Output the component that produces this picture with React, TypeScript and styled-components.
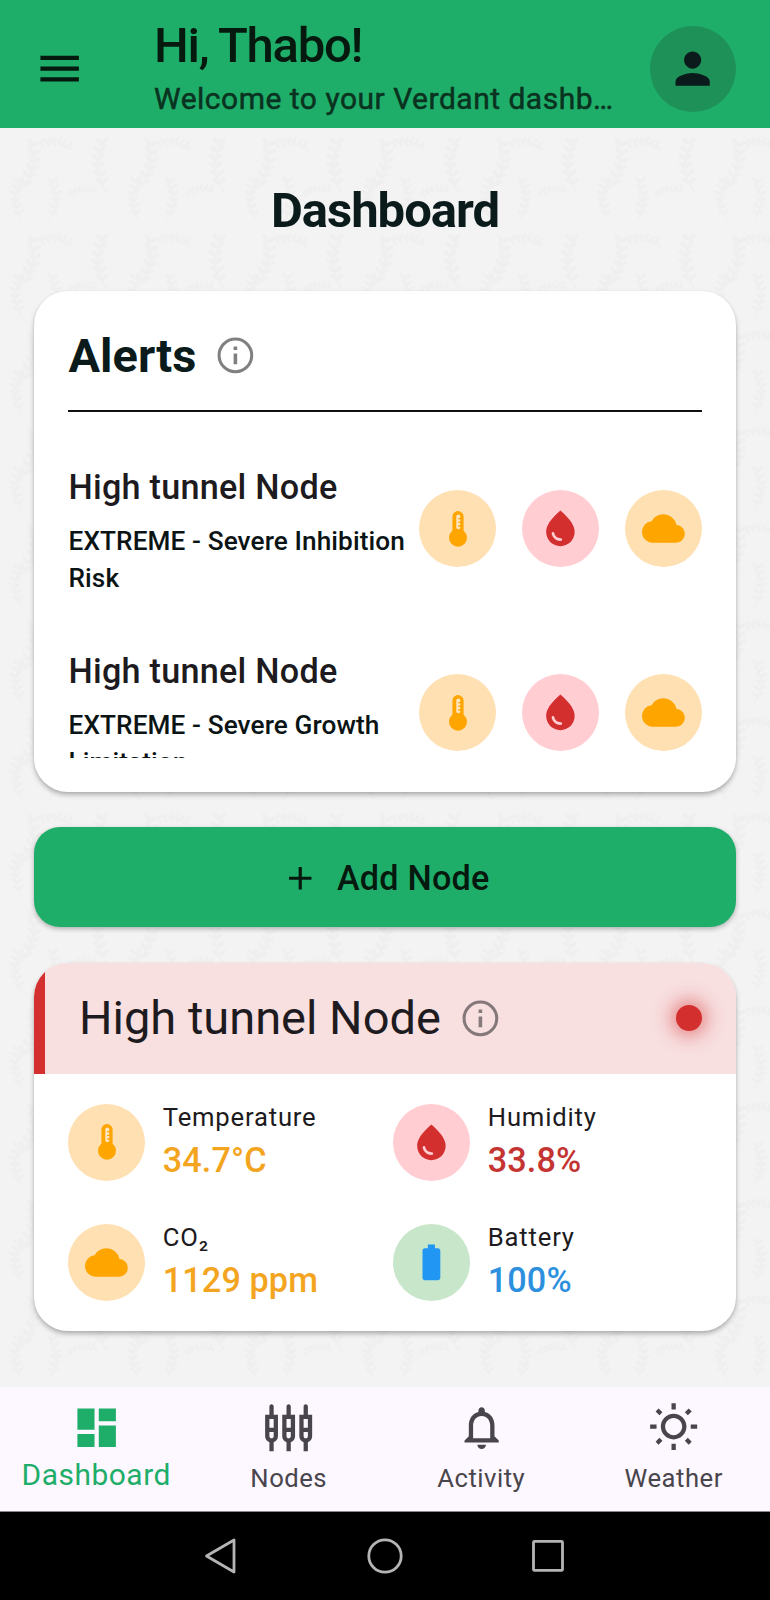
import React from "react";
import styled, { createGlobalStyle } from "styled-components";
import {
  MdAdd,
  MdBatteryFull,
  MdCloud,
  MdDashboard,
  MdMenu,
  MdOutlineNotifications,
  MdOutlineSettingsInputComponent,
  MdOutlineWbSunny,
  MdPerson,
  MdWaterDrop,
} from "react-icons/md";

const GlobalStyle = createGlobalStyle`
  * { box-sizing: border-box; }
  html, body { margin: 0; padding: 0; }
  body { font-family: Roboto, "Liberation Sans", sans-serif; color: #1d1b20; background: #f3f3f3; }
  svg { display: block; flex: none; overflow: visible; }
`;

const Screen = styled.div`
  width: 770px;
  height: 1600px;
  display: flex;
  flex-direction: column;
  overflow: hidden;
`;

const AppBar = styled.header`
  height: 128px;
  flex: none;
  display: flex;
  align-items: center;
  padding: 9px 34px 0 34px;
  background: #1fae69;
  color: #05190f;
`;

const MenuButton = styled.div`
  width: 120px;
  display: flex;
`;

const Greeting = styled.div`
  width: 465px;
  white-space: nowrap;
  height: 119px;
  padding-top: 8px;
`;

const GreetingTitle = styled.div`
  font-size: 49px;
  line-height: 58px;
  font-weight: 500;
  letter-spacing: -1.3px;
`;

const GreetingText = styled.div`
  margin-top: 5px;
  font-size: 30px;
  line-height: 38px;
  letter-spacing: 0.5px;
  overflow: hidden;
  text-overflow: ellipsis;
  color: #0a3220;
  -webkit-text-stroke: 0.5px #0a3220;
`;

const Avatar = styled.div`
  width: 86px;
  height: 86px;
  margin-left: auto;
  border-radius: 50%;
  background: #1e9158;
  color: #0b1a1a;
  display: flex;
  align-items: center;
  justify-content: center;
`;

const Main = styled.main`
  position: relative;
  height: 1259px;
  flex: none;
  padding: 0 34px;
  display: flex;
  flex-direction: column;
`;

const Backdrop = styled.svg`
  position: absolute;
  inset: 0;
  z-index: -1;
`;

const PageTitle = styled.h1`
  margin: 54px 0 50.7px;
  font-size: 49px;
  line-height: 58px;
  font-weight: 700;
  letter-spacing: -1px;
  text-align: center;
  color: #0b1a1a;
`;

const Card = styled.section`
  background: #fff;
  border-radius: 34px;
  box-shadow: 0 3px 5px rgba(0, 0, 0, 0.26), 0 1px 3px rgba(0, 0, 0, 0.06);
`;

const AlertsCard = styled(Card)`
  height: 501px;
  padding: 34px 34px;
`;

const AlertsHeading = styled.div`
  display: flex;
  align-items: center;
  gap: 18px;
  height: 62px;
  padding-left: 0.5px;
  color: #808080;
`;

const AlertsTitle = styled.h2`
  margin: 0;
  font-size: 47px;
  line-height: 56px;
  font-weight: 700;
  color: #0b1a1a;
`;

const Divider = styled.div`
  height: 2px;
  margin-top: 23px;
  background: #111;
`;

const AlertList = styled.div`
  height: 346px;
  overflow: hidden;
  padding-top: 25px;
`;

const AlertRow = styled.div`
  height: 184px;
  display: flex;
  align-items: center;
  justify-content: space-between;
`;

const AlertBody = styled.div`
  width: 350px;
  padding: 2px 0 0 0.5px;
  white-space: nowrap;
`;

const AlertName = styled.div`
  font-size: 34.2px;
  line-height: 51px;
  letter-spacing: 0.25px;
  font-weight: 500;
`;

const AlertText = styled.div`
  margin-top: 10px;
  font-size: 26.2px;
  line-height: 36.7px;
  letter-spacing: 0.1px;
  font-weight: 500;
  color: #0b1414;
`;

const BadgeGroup = styled.div`
  display: flex;
  gap: 25.8px;
`;

const tones = {
  amber: { bg: "#ffe0b2", fg: "#ffa500", text: "#f3a51f" },
  red: { bg: "#ffcdd2", fg: "#d32f2f", text: "#c43432" },
  green: { bg: "#c8e6c9", fg: "#2196f3", text: "#2c90de" },
};
type Tone = keyof typeof tones;

const Badge = styled.div<{ $tone: Tone }>`
  width: 77px;
  height: 77px;
  flex: none;
  border-radius: 50%;
  display: flex;
  align-items: center;
  justify-content: center;
  background: ${(p) => tones[p.$tone].bg};
  color: ${(p) => tones[p.$tone].fg};
`;

const AddButton = styled.button`
  height: 100.5px;
  margin: 35px 0 35.4px;
  flex: none;
  border: 0;
  border-radius: 26px;
  background: #1fae69;
  color: #05190f;
  box-shadow: 0 2px 5px rgba(0, 0, 0, 0.28);
  display: flex;
  align-items: center;
  justify-content: center;
  gap: 17px;
  padding: 2px 0 0 1px;
  font: 500 34.2px/50px Roboto, sans-serif;
  letter-spacing: 0.2px;
`;

const NodeCard = styled(Card)`
  height: 368px;
  overflow: hidden;
`;

const NodeHeader = styled.div`
  height: 111px;
  border-left: 11px solid #d32f2f;
  background: #f8dfe0;
  display: flex;
  align-items: center;
  gap: 18px;
  padding: 0 34px;
  color: #85787a;
`;

const NodeTitle = styled.div`
  font-size: 47px;
  line-height: 58px;
  color: #1d1b20;
`;

const StatusDot = styled.div`
  width: 26px;
  height: 26px;
  margin-left: auto;
  border-radius: 50%;
  background: #d32f2f;
  box-shadow: 0 0 17px 5px rgba(211, 47, 47, 0.5);
`;

const Metrics = styled.div`
  padding: 30.2px 34.3px 0;
  display: grid;
  grid-template-columns: 325px 1fr;
  row-gap: 43px;
`;

const Metric = styled.div`
  display: flex;
  gap: 17.5px;
  height: 77px;
`;

const MetricLabel = styled.div`
  margin-top: -4px;
  font-size: 25.67px;
  line-height: 34px;
  letter-spacing: 0.8px;
`;

const MetricValue = styled.div<{ $tone: Tone }>`
  font-size: 34.2px;
  line-height: 52px;
  letter-spacing: 0.1px;
  font-weight: 500;
  color: ${(p) => tones[p.$tone].text};
`;

const TabBar = styled.nav`
  height: 124px;
  flex: none;
  display: grid;
  grid-template-columns: repeat(4, 1fr);
  background: #fdf7ff;
`;

const Tab = styled.div<{ $active?: boolean }>`
  display: flex;
  flex-direction: column;
  align-items: center;
  padding-top: 15px;
  color: ${(p) => (p.$active ? "#1fae69" : "#49454c")};
  font-size: ${(p) => (p.$active ? "29.95px" : "25.67px")};
  letter-spacing: ${(p) => (p.$active ? "0.5px" : "0.5px")};
`;

const TabLabel = styled.span<{ $active?: boolean }>`
  line-height: 44px;
  margin-top: ${(p) => (p.$active ? "0" : "3px")};
`;

const SystemBar = styled.div`
  height: 89px;
  border-top: 1px solid #8a888b;
  background: #000;
  display: flex;
  justify-content: center;
  align-items: center;
`;

function InfoIcon() {
  return (
    <svg width="42.8" height="42.8" viewBox="0 0 24 24" fill="none" stroke="currentColor">
      <circle cx="12" cy="12" r="9.15" strokeWidth="1.7" />
      <path d="M12 11v6M12 7v2" strokeWidth="2" />
    </svg>
  );
}

function ThermometerIcon() {
  return (
    <svg width="18" height="36" viewBox="0 0 18 36">
      <path d="M3.4 5.6a5.6 5.6 0 0 1 11.2 0v14.1a9 9 0 1 1-11.2 0z" fill="currentColor" />
      <path d="M9.3 5.6v10.6" stroke="#ffe6c2" strokeWidth="4" strokeLinecap="round" />
      <path d="M9.3 7.6h3M9.3 11.3h3M9.3 15h3" stroke="currentColor" strokeWidth="1.3" />
    </svg>
  );
}

const leaflets = [0, 1, 2, 3, 4, 5];

function Sprig({ place }: { place: string }) {
  return (
    <g transform={place}>
      <path d="M8 26C-4 12-4-8 6-22" fill="none" stroke="#eeeeee" strokeWidth="1.5" />
      {leaflets.map((i) => (
        <g key={i} transform={`translate(${Math.abs(i - 2.5) * 2 - 2} ${20 - i * 8})`}>
          <ellipse cx="-5" cy="-2" rx="5.5" ry="2.2" transform="rotate(38)" />
          <ellipse cx="5" cy="-2" rx="5.5" ry="2.2" transform="rotate(-42)" />
        </g>
      ))}
    </g>
  );
}

function LeafBackdrop() {
  return (
    <Backdrop width="770" height="1259">
      <defs>
        <pattern id="leaves" x="-5" width="117.5" height="96.5" patternUnits="userSpaceOnUse">
          <g fill="#efefef">
            <Sprig place="translate(36 40) scale(-1 1) rotate(-12)" />
            <Sprig place="translate(104 38)" />
            <Sprig place="translate(21 72) scale(.8)" />
            <Sprig place="translate(60 72) scale(-.8 .8)" />
            <Sprig place="translate(84 62) rotate(80) scale(.6)" />
            <Sprig place="translate(58 14) rotate(95) scale(.7)" />
          </g>
        </pattern>
      </defs>
      <rect width="770" height="1259" fill="#f3f3f3" />
      <rect width="770" height="1259" fill="url(#leaves)" />
    </Backdrop>
  );
}

function AlertItem({ name, lines }: { name: string; lines: string[] }) {
  return (
    <AlertRow>
      <AlertBody>
        <AlertName>{name}</AlertName>
        <AlertText>
          {lines[0]}
          <br />
          {lines[1]}
        </AlertText>
      </AlertBody>
      <BadgeGroup>
        <Badge $tone="amber"><ThermometerIcon /></Badge>
        <Badge $tone="red"><MdWaterDrop size={42.8} /></Badge>
        <Badge $tone="amber"><MdCloud size={42.8} /></Badge>
      </BadgeGroup>
    </AlertRow>
  );
}

function MetricItem(props: { tone: Tone; icon: React.ReactNode; label: string; value: string }) {
  return (
    <Metric>
      <Badge $tone={props.tone}>{props.icon}</Badge>
      <div>
        <MetricLabel>{props.label}</MetricLabel>
        <MetricValue $tone={props.tone}>{props.value}</MetricValue>
      </div>
    </Metric>
  );
}

export default function App() {
  return (
    <Screen>
      <GlobalStyle />
      <AppBar>
        <MenuButton><MdMenu size={51.3} /></MenuButton>
        <Greeting>
          <GreetingTitle>Hi, Thabo!</GreetingTitle>
          <GreetingText>Welcome to your Verdant dashb…</GreetingText>
        </Greeting>
        <Avatar><MdPerson size={51.3} /></Avatar>
      </AppBar>
      <Main>
        <LeafBackdrop />
        <PageTitle>Dashboard</PageTitle>
        <AlertsCard>
          <AlertsHeading>
            <AlertsTitle>Alerts</AlertsTitle>
            <InfoIcon />
          </AlertsHeading>
          <Divider />
          <AlertList>
            <AlertItem name="High tunnel Node" lines={["EXTREME - Severe Inhibition", "Risk"]} />
            <AlertItem name="High tunnel Node" lines={["EXTREME - Severe Growth", "Limitation"]} />
          </AlertList>
        </AlertsCard>
        <AddButton>
          <MdAdd size={38.5} />
          Add Node
        </AddButton>
        <NodeCard>
          <NodeHeader>
            <NodeTitle>High tunnel Node</NodeTitle>
            <InfoIcon />
            <StatusDot />
          </NodeHeader>
          <Metrics>
            <MetricItem tone="amber" icon={<ThermometerIcon />} label="Temperature" value="34.7°C" />
            <MetricItem tone="red" icon={<MdWaterDrop size={42.8} />} label="Humidity" value="33.8%" />
            <MetricItem tone="amber" icon={<MdCloud size={42.8} />} label="CO₂" value="1129 ppm" />
            <MetricItem tone="green" icon={<MdBatteryFull size={42.8} />} label="Battery" value="100%" />
          </Metrics>
        </NodeCard>
      </Main>
      <TabBar>
        <Tab $active><MdDashboard size={51.3} /><TabLabel $active>Dashboard</TabLabel></Tab>
        <Tab><MdOutlineSettingsInputComponent size={51.3} /><TabLabel>Nodes</TabLabel></Tab>
        <Tab><MdOutlineNotifications size={51.3} /><TabLabel>Activity</TabLabel></Tab>
        <Tab><MdOutlineWbSunny size={51.3} /><TabLabel>Weather</TabLabel></Tab>
      </TabBar>
      <SystemBar>
        <svg width="362" height="38" viewBox="0 0 362 38" fill="none" stroke="#b4b4b4" strokeWidth="2.8" strokeLinejoin="round">
          <path d="M30 3v32L2.5 19z" />
          <circle cx="181" cy="19" r="16.2" />
          <rect x="329.5" y="4.4" width="29" height="29" rx="1" />
        </svg>
      </SystemBar>
    </Screen>
  );
}
